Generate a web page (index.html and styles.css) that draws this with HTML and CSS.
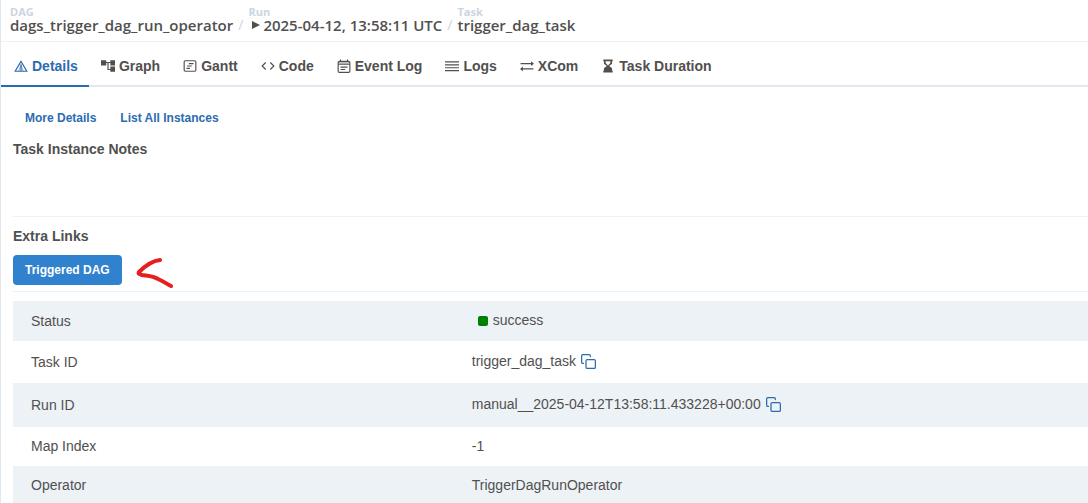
FILE: index.html
```html
<!DOCTYPE html>
<html lang="en">
<head>
    <meta charset="UTF-8">
    <meta name="viewport" content="width=device-width, initial-scale=1.0">
    <title>trigger_dag_task - Airflow</title>
    <link rel="stylesheet" href="styles.css">
</head>
<body>
    <main class="panel">
        <nav class="breadcrumb" aria-label="Breadcrumb">
            <div class="crumb">
                <span class="crumb-label">DAG</span>
                <a class="crumb-link" href="#dag">dags_trigger_dag_run_operator</a>
            </div>
            <span class="separator">/</span>
            <div class="crumb">
                <span class="crumb-label">Run</span>
                <a class="crumb-link crumb-run" href="#run"><svg class="play" viewBox="0 0 8 8"><path d="M0 0l8 4-8 4z" fill="currentColor"/></svg>2025-04-12, 13:58:11 UTC</a>
            </div>
            <span class="separator">/</span>
            <div class="crumb">
                <span class="crumb-label">Task</span>
                <a class="crumb-link" href="#task">trigger_dag_task</a>
            </div>
        </nav>

        <div class="tabs" role="tablist">
            <button class="tab active" role="tab" aria-selected="true">
                <svg class="icon" viewBox="0 0 24 24" fill="none" stroke="currentColor" stroke-width="2"><path d="M12 4L2 21h20z"/><path d="M12 9v12"/><path d="M12 11L8 21M12 11l4 10" stroke-width="1"/></svg>
                Details
            </button>
            <button class="tab" role="tab">
                <svg class="icon" viewBox="0 0 24 24" fill="currentColor"><path d="M24 11V2h-8v3H9V2H0v9h9V7h2v12h5v3h8v-9h-8v4h-3V7h3v4z"/></svg>
                Graph
            </button>
            <button class="tab" role="tab">
                <svg class="icon" viewBox="0 0 24 24" fill="none" stroke="currentColor" stroke-width="2"><rect x="2" y="3" width="20" height="18" rx="2"/><path d="M10 8h8M7 12h8M6 16h6"/></svg>
                Gantt
            </button>
            <button class="tab" role="tab">
                <svg class="icon" viewBox="0 0 24 24" fill="none" stroke="currentColor" stroke-width="2"><path d="M8 6l-6 6 6 6M16 6l6 6-6 6"/></svg>
                Code
            </button>
            <button class="tab" role="tab">
                <svg class="icon" viewBox="0 0 24 24" fill="none" stroke="currentColor" stroke-width="2"><rect x="2" y="4" width="20" height="19" rx="2"/><path d="M2 9h20M6 1v4M18 1v4M6 14h12M6 18h8"/><path d="M3 5h18v3H3z" fill="currentColor" stroke="none" opacity=".4"/></svg>
                Event Log
            </button>
            <button class="tab" role="tab">
                <svg class="icon" viewBox="0 0 24 24" fill="none" stroke="currentColor" stroke-width="2"><path d="M0 5h24M0 10h24M0 15h24M0 20h24"/></svg>
                Logs
            </button>
            <button class="tab" role="tab">
                <svg class="icon" viewBox="0 0 24 24" fill="none" stroke="currentColor" stroke-width="2"><path d="M1 8h20M23 17H3"/><path d="M19 4l5 4-5 4zM5 13l-5 4 5 4z" fill="currentColor" stroke="none"/></svg>
                XCom
            </button>
            <button class="tab" role="tab">
                <svg class="icon" viewBox="0 0 24 24" fill="currentColor"><path d="M4 1h16v3h-1v4l-5 4 5 4v4h1v3H4v-3h1v-4l5-4-5-4V4H4zM8 4v3l4 4 4-4V4z" fill-rule="evenodd"/></svg>
                Task Duration
            </button>
        </div>

        <div class="content">
            <div class="actions">
                <a href="#details">More Details</a>
                <a href="#instances">List All Instances</a>
            </div>

            <section class="notes">
                <h2>Task Instance Notes</h2>
            </section>

            <section class="extra-links">
                <h2>Extra Links</h2>
                <div class="link-row">
                    <a class="link-button" href="#triggered">Triggered DAG</a>
                    <svg class="arrow" viewBox="0 0 38 36" fill="none" stroke="#e81e1e" stroke-width="4" stroke-linecap="round" stroke-linejoin="round"><path d="M24 8C15 9 8 15 3 20c-1 2 0 2 3 3 6 1 11 1 16 4 5 2 9 5 13 7"/></svg>
                </div>
            </section>

            <table class="info">
                <tbody>
                    <tr>
                        <th scope="row">Status</th>
                        <td><div class="status"><span class="status-box"></span>success</div></td>
                    </tr>
                    <tr class="copy-row">
                        <th scope="row">Task ID</th>
                        <td>
                            <div class="copy">trigger_dag_task
                                <button class="copy-button" aria-label="Copy task ID"><svg viewBox="0 0 24 24" fill="none" stroke="currentColor" stroke-width="2" stroke-linecap="round" stroke-linejoin="round"><rect x="8" y="9" width="15" height="14" rx="2"/><path d="M4 15H3a2 2 0 0 1-2-2V3a2 2 0 0 1 2-2h10a2 2 0 0 1 2 2v1"/></svg></button>
                            </div>
                        </td>
                    </tr>
                    <tr class="copy-row run-row">
                        <th scope="row">Run ID</th>
                        <td>
                            <div class="copy">manual__2025-04-12T13:58:11.433228+00:00
                                <button class="copy-button" aria-label="Copy run ID"><svg viewBox="0 0 24 24" fill="none" stroke="currentColor" stroke-width="2" stroke-linecap="round" stroke-linejoin="round"><rect x="8" y="9" width="15" height="14" rx="2"/><path d="M4 15H3a2 2 0 0 1-2-2V3a2 2 0 0 1 2-2h10a2 2 0 0 1 2 2v1"/></svg></button>
                            </div>
                        </td>
                    </tr>
                    <tr>
                        <th scope="row">Map Index</th>
                        <td>-1</td>
                    </tr>
                    <tr>
                        <th scope="row">Operator</th>
                        <td>TriggerDagRunOperator</td>
                    </tr>
                </tbody>
            </table>
        </div>
    </main>
</body>
</html>
```
FILE: styles.css
```css
body {
    margin: 0;
    font-family: "Liberation Sans", Arial, sans-serif;
    font-size: 14px;
    line-height: 16px;
    color: #51504f;
    background-color: #ffffff;
    overflow: hidden;
}
a {
    color: inherit;
    text-decoration: none;
}
button {
    font: inherit;
    color: inherit;
    background: none;
    border: none;
    padding: 0;
    cursor: pointer;
}
h2 {
    margin: 0;
    font-size: 14px;
    line-height: 16px;
}
.panel {
    min-height: 100vh;
    border-left: 1px solid #e2e8f0;
}

/* breadcrumb */
.breadcrumb {
    display: flex;
    align-items: flex-end;
    padding: 6px 9px 8px;
    border-bottom: 1px solid #edf2f7;
    font-family: "Open Sans", "Segoe UI", sans-serif;
    font-weight: 600;
}
.crumb {
    display: flex;
    flex-direction: column;
}
.crumb-label {
    font-size: 11px;
    line-height: 11px;
    font-weight: 700;
    color: #cbd5e0;
}
.crumb-link {
    font-size: 15px;
    line-height: 16px;
}
.crumb-run {
    display: flex;
    align-items: center;
    gap: 3px;
    padding-left: 4px;
}
.play {
    width: 8px;
    height: 8px;
}
.separator {
    padding: 0 5px;
    line-height: 16px;
    font-weight: 400;
    color: #cbd5e0;
}

/* tabs */
.tabs {
    display: flex;
    border-bottom: 2px solid #e2e8f0;
}
.tab {
    display: flex;
    align-items: center;
    gap: 4px;
    padding: 16px 11px 11px 12px;
    margin-bottom: -2px;
    border-bottom: 2px solid transparent;
    font-weight: bold;
}
.tab.active {
    padding-left: 13px;
    color: #2b6cb0;
    border-color: #2b6cb0;
}
.icon {
    width: 14px;
    height: 14px;
}

/* details */
.content {
    padding-left: 12px;
}
.actions {
    display: flex;
    gap: 24px;
    padding: 23px 12px 0;
    font-size: 12px;
    font-weight: bold;
    color: #2b6cb0;
}
.notes {
    padding-top: 15px;
    min-height: 75px;
    border-bottom: 1px solid #edf2f7;
}
.extra-links {
    padding: 11px 0 6px;
    border-bottom: 1px solid #edf2f7;
}
.link-row {
    display: flex;
    align-items: center;
    gap: 14px;
    padding-top: 11px;
}
.link-button {
    padding: 7px 12px;
    border-radius: 4px;
    background-color: #3182ce;
    color: #ffffff;
    font-size: 12px;
    font-weight: bold;
}
.arrow {
    width: 38px;
    height: 36px;
    margin: -3px 0;
}
.info {
    width: 100%;
    margin-top: 9px;
    border-collapse: collapse;
}
.info th,
.info td {
    padding: 11px 18px 12px;
    text-align: left;
    font-weight: normal;
}
.info th {
    width: 41%;
    box-sizing: border-box;
}
.info tr:nth-child(odd) {
    background-color: #edf2f7;
}
.status,
.copy {
    display: flex;
    align-items: center;
    gap: 5px;
}
.status {
    padding-left: 6px;
    line-height: 17px;
}
.status-box {
    width: 10px;
    height: 10px;
    border-radius: 2px;
    background-color: #008000;
}
.copy-row .copy {
    line-height: 19px;
}
.run-row .copy {
    line-height: 21px;
}
.copy-button {
    display: flex;
    color: #2b6cb0;
}
.copy-button svg {
    width: 15px;
    height: 15px;
}
```
